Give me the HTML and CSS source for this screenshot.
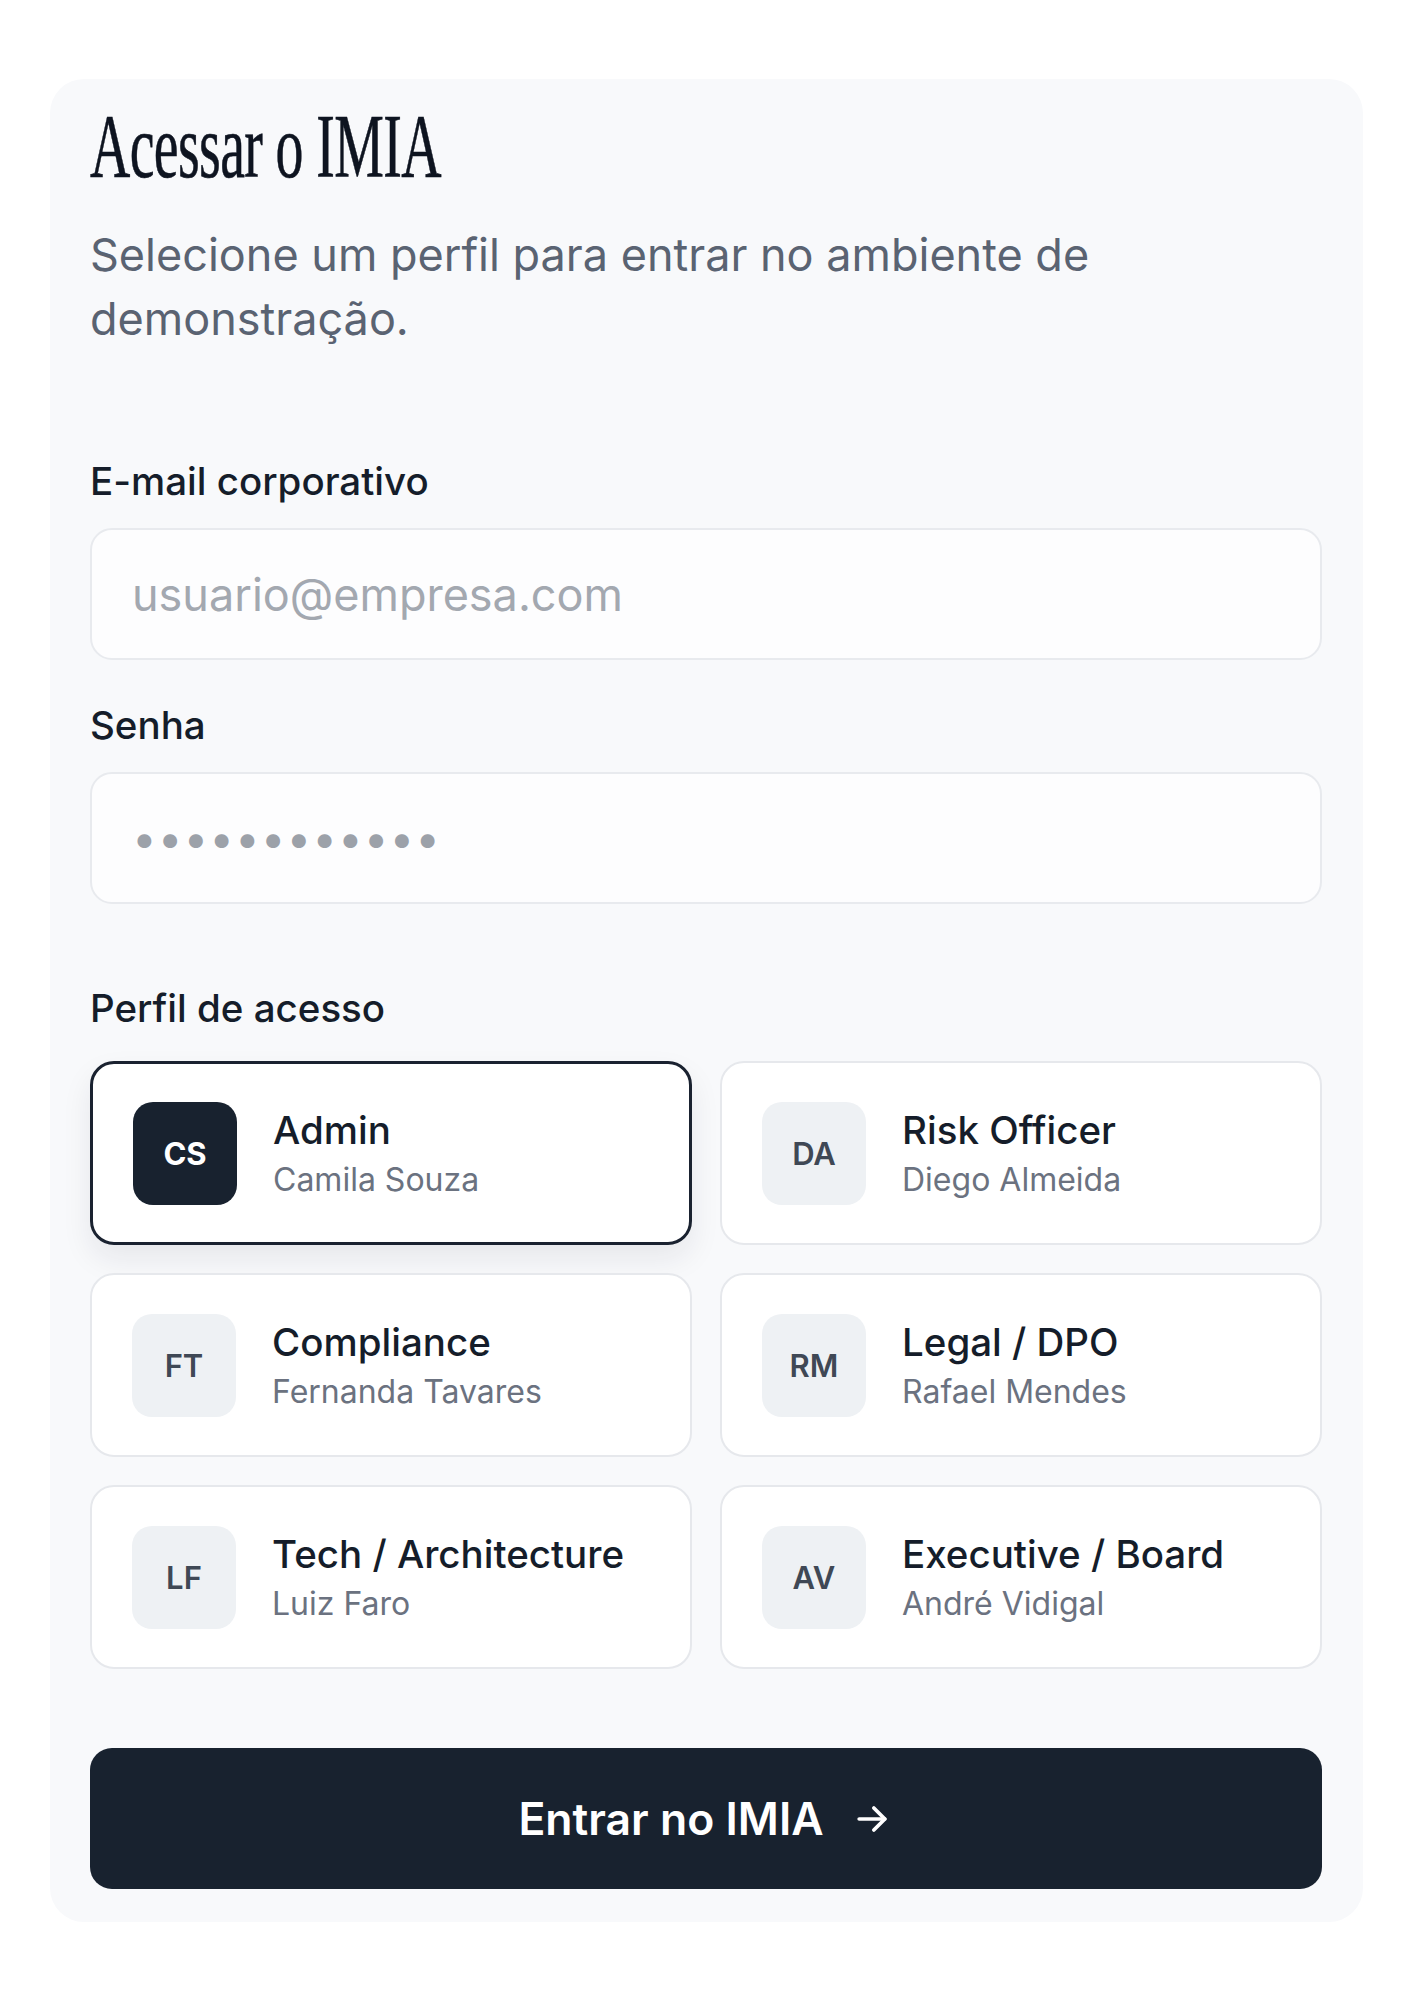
FILE: index.html
```html
<!DOCTYPE html>
<html lang="pt-BR">
<head>
  <meta charset="UTF-8" />
  <meta name="viewport" content="width=device-width, initial-scale=1.0"/>
  <title>Acessar o IMIA</title>
  <link rel="stylesheet" href="styles.css">
</head>
<body>
  <div class="login">
    <h1 class="title">Acessar o IMIA</h1>
    <p class="subtitle">Selecione um perfil para entrar no ambiente de demonstração.</p>

    <form class="form" onsubmit="return false">
      <div class="field">
        <label for="email">E-mail corporativo</label>
        <input id="email" type="email" placeholder="usuario@empresa.com">
      </div>

      <div class="field">
        <label for="senha">Senha</label>
        <input id="senha" class="password" type="password" value="demo12345678">
      </div>

      <div class="field profiles-field">
        <span class="label">Perfil de acesso</span>
        <div class="profiles">
          <button type="button" class="profile selected">
            <span class="avatar">CS</span>
            <span class="info"><span class="role">Admin</span><span class="name">Camila Souza</span></span>
          </button>
          <button type="button" class="profile">
            <span class="avatar">DA</span>
            <span class="info"><span class="role">Risk Officer</span><span class="name">Diego Almeida</span></span>
          </button>
          <button type="button" class="profile">
            <span class="avatar">FT</span>
            <span class="info"><span class="role">Compliance</span><span class="name">Fernanda Tavares</span></span>
          </button>
          <button type="button" class="profile">
            <span class="avatar">RM</span>
            <span class="info"><span class="role">Legal / DPO</span><span class="name">Rafael Mendes</span></span>
          </button>
          <button type="button" class="profile">
            <span class="avatar">LF</span>
            <span class="info"><span class="role">Tech / Architecture</span><span class="name">Luiz Faro</span></span>
          </button>
          <button type="button" class="profile">
            <span class="avatar">AV</span>
            <span class="info"><span class="role">Executive / Board</span><span class="name">André Vidigal</span></span>
          </button>
        </div>
      </div>

      <button type="submit" class="submit">
        Entrar no IMIA
        <svg width="44" height="44" viewBox="0 0 24 24" fill="none" stroke="currentColor" stroke-width="2" stroke-linecap="round" stroke-linejoin="round"><path d="M5 12h14"/><path d="M13 6l6 6-6 6"/></svg>
      </button>
    </form>
  </div>

  <script>
    document.querySelectorAll('.profile').forEach((card) => {
      card.addEventListener('click', () => {
        document.querySelectorAll('.profile').forEach((c) => c.classList.remove('selected'));
        card.classList.add('selected');
      });
    });
  </script>
</body>
</html>
```

FILE: styles.css
```css
* {
  box-sizing: border-box;
}

body {
  margin: 0;
  background: #fff;
  font-family: 'Inter', 'Noto Sans', sans-serif;
  color: #151d2a;
  padding: 79px 51px 0 50px;
}

.login {
  background: #f8f9fb;
  border-radius: 34px;
  padding: 14px 41px 33px 40px;
}

.title {
  margin: 0;
  font-family: 'Liberation Serif', serif;
  font-weight: 400;
  font-size: 90px;
  line-height: 1.2;
  letter-spacing: -1px;
  color: #0e1420;
  transform: scaleX(0.62);
  transform-origin: left center;
  white-space: nowrap;
  -webkit-text-stroke: 0.6px #0e1420;
}

.subtitle {
  margin: 22px 0 0;
  font-size: 45px;
  line-height: 64px;
  color: #5a6372;
}

.form {
  display: flex;
  flex-direction: column;
  margin-top: 107px;
}

.field {
  display: flex;
  flex-direction: column;
  gap: 24px;
  margin-bottom: 42px;
}

.field label,
.field .label {
  font-size: 38.5px;
  font-weight: 500;
  color: #151d2a;
  line-height: 46px;
}

.field input {
  height: 132px;
  border: 2px solid #e8eaee;
  border-radius: 22px;
  background: #fdfdfe;
  padding: 0 40px;
  font-family: 'Inter', sans-serif;
  font-size: 45px;
  color: #151d2a;
  outline: none;
}

.field input::placeholder {
  color: #a3a8b0;
}

.field input.password {
  color: #9ca1a9;
  font-size: 44px;
  letter-spacing: 1px;
}

.profiles-field {
  margin-top: 39px;
  margin-bottom: 79px;
  gap: 30px;
}

.profiles {
  display: grid;
  grid-template-columns: 1fr 1fr;
  gap: 28px;
}

.profile {
  display: flex;
  align-items: center;
  gap: 36px;
  height: 184px;
  padding: 0 40px;
  background: #fff;
  border: 2px solid #e6e8ec;
  border-radius: 24px;
  font-family: inherit;
  text-align: left;
  cursor: pointer;
}

.profile.selected {
  border: 3px solid #1a2230;
  box-shadow: 0 14px 30px rgba(20, 30, 45, 0.08);
}

.avatar {
  flex: none;
  width: 104px;
  height: 103px;
  border-radius: 20px;
  background: #eef1f4;
  color: #3f4855;
  display: flex;
  align-items: center;
  justify-content: center;
  font-size: 31px;
  font-weight: 600;
}

.profile.selected .avatar {
  background: #18222f;
  color: #fff;
  font-weight: 700;
}

.info {
  display: flex;
  flex-direction: column;
  gap: 8px;
}

.role {
  font-size: 38.5px;
  font-weight: 500;
  color: #151d2a;
  line-height: 46px;
}

.name {
  font-size: 32px;
  color: #6b7280;
  line-height: 38px;
}

.submit {
  height: 141px;
  border: none;
  border-radius: 22px;
  background: #18222f;
  color: #fff;
  font-family: inherit;
  font-size: 44.5px;
  font-weight: 600;
  display: flex;
  align-items: center;
  justify-content: center;
  gap: 26px;
  cursor: pointer;
}
```
